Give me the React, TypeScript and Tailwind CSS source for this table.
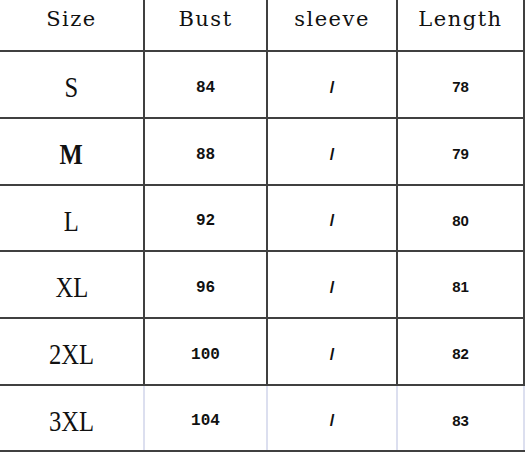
const rows = [
  { size: "S", bust: "84", length: "78", h: "h-[67px]", bold: false },
  { size: "M", bust: "88", length: "79", h: "h-[67px]", bold: true },
  { size: "L", bust: "92", length: "80", h: "h-[66px]", bold: false },
  { size: "XL", bust: "96", length: "81", h: "h-[67px]", bold: false },
  { size: "2XL", bust: "100", length: "82", h: "h-[67px]", bold: false },
  { size: "3XL", bust: "104", length: "83", h: "h-[66px]", bold: false },
];

export default function App() {
  return (
    <div className="w-[530px] h-[454px] bg-white text-[#111] overflow-hidden">
      {/* header */}
      <div className="flex h-[52px] border-b-2 border-[#404040] w-[525px] font-['DejaVu_Serif',serif] text-[21px] tracking-[1.5px]">
        <div className="w-[145px] border-r-2 border-[#404040] flex items-center justify-center pb-[10px]">Size</div>
        <div className="w-[123px] border-r-2 border-[#404040] flex items-center justify-center pb-[10px]">Bust</div>
        <div className="w-[130px] border-r-2 border-[#404040] flex items-center justify-center pb-[10px]">sleeve</div>
        <div className="w-[127px] border-r-2 border-[#404040] flex items-center justify-center pb-[10px]">Length</div>
      </div>

      {rows.map((r, i) => {
        const last = i === rows.length - 1;
        const line = last ? "border-[#dcdfef]" : "border-[#404040]";
        return (
          <div key={r.size} className={`flex w-[525px] border-b-2 border-b-[#404040] ${r.h}`}>
            <div className={`w-[145px] border-r-2 ${line} flex items-center justify-center pt-[4px]`}>
              <span
                className={`font-['Liberation_Serif',serif] text-[30px] scale-x-[0.82] ${r.bold ? "font-bold" : "font-normal"}`}
              >
                {r.size}
              </span>
            </div>
            <div className={`w-[123px] border-r-2 ${line} flex items-center justify-center pt-[6px] font-['Liberation_Mono',monospace] font-bold text-[16px]`}>
              {r.bust}
            </div>
            <div className={`w-[130px] border-r-2 ${line} flex items-center justify-center pt-[6px] font-['Liberation_Sans',sans-serif] font-bold text-[17px]`}>
              /
            </div>
            <div className={`w-[127px] border-r-2 ${line} flex items-center justify-center pt-[6px] font-['Liberation_Sans',sans-serif] font-bold text-[15px]`}>
              {r.length}
            </div>
          </div>
        );
      })}
    </div>
  );
}
